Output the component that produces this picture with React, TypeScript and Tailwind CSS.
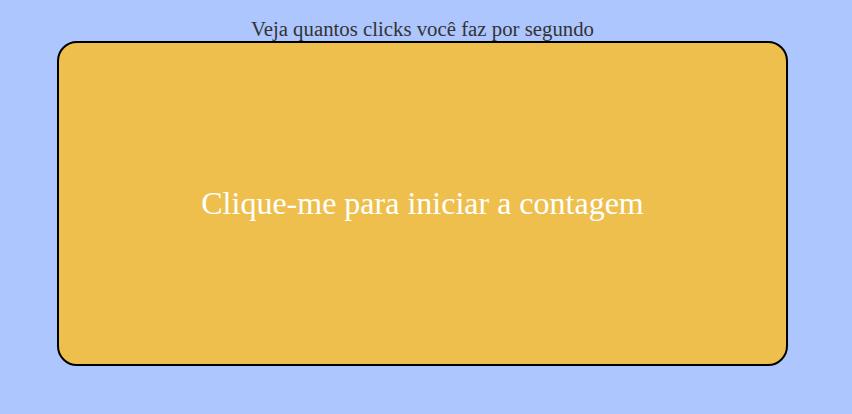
export default function App() {
  return (
    <div className="min-h-[414px] w-full bg-[#adc6fe] flex flex-col items-center pt-[17px] pr-[7px] font-['Liberation_Serif',serif]">
      <p className="text-[20.8px] leading-[24px] text-[#333]">Veja quantos clicks você faz por segundo</p>
      <button className="w-[731px] h-[325px] bg-[#eebf4c] border-2 border-black rounded-[20px] flex items-center justify-center text-white text-[32px] leading-[37px]">
        Clique-me para iniciar a contagem
      </button>
    </div>
  )
}
